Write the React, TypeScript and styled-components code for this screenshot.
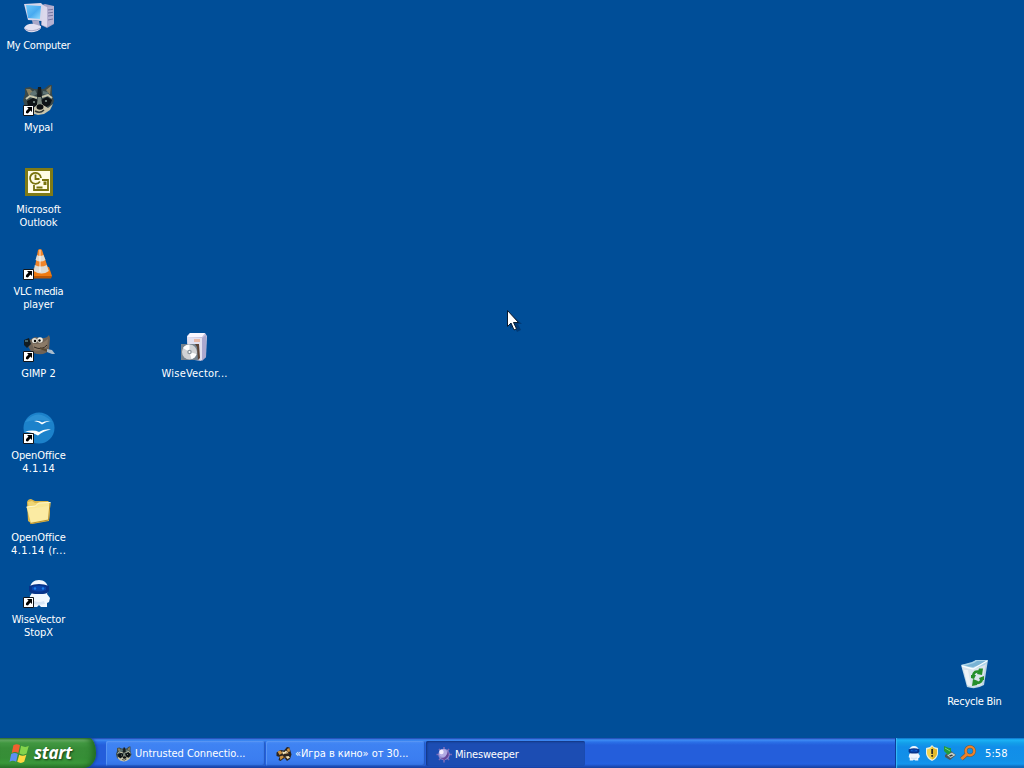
import React from 'react';
import styled, { createGlobalStyle } from 'styled-components';

const GlobalStyle = createGlobalStyle`
  * { box-sizing: border-box; }
  body { margin: 0; overflow: hidden; }
`;

const Screen = styled.div`
  position: relative;
  display: flex;
  flex-direction: column;
  width: 1024px;
  height: 768px;
  overflow: hidden;
  background: #004e98;
  color: #fff;
  font-family: 'DejaVu Sans Condensed', 'DejaVu Sans', sans-serif;
  font-stretch: condensed;
  font-size: 11px;
  cursor: default;
`;

const Desktop = styled.main`
  flex: 1;
  position: relative;
`;

const IconColumn = styled.div`
  display: flex;
  flex-direction: column;
  width: 77px;
`;

const Shortcut = styled.div`
  display: flex;
  flex-direction: column;
  align-items: center;
  width: 77px;
  height: 82px;
  padding-top: 2px;
`;

const Placed = styled.div<{ $x: number; $y: number }>`
  position: absolute;
  left: ${(p) => p.$x}px;
  top: ${(p) => p.$y}px;
`;

const Caption = styled.span<{ $track: number }>`
  height: 13px;
  line-height: 13px;
  white-space: nowrap;
  letter-spacing: ${(p) => p.$track}px;
  margin-right: ${(p) => -p.$track}px;
`;

const IconArt = styled.svg`
  display: block;
  flex: none;
  width: 32px;
  height: 32px;
  margin-bottom: 5px;
  overflow: visible;
`;

const Pointer = styled.svg`
  position: absolute;
  left: 507px;
  top: 310px;
  width: 14px;
  height: 22px;
  overflow: visible;
`;

const Taskbar = styled.footer`
  display: flex;
  height: 30px;
  background: linear-gradient(#1941a5 0, #3168d5 1px, #3f8cf3 2px, #2b71e8 4px, #245edb 7px, #245edb 22px, #2461e0 26px, #1d4ebf 28px, #17409c 30px);
`;

const StartButton = styled.button`
  display: flex;
  align-items: center;
  width: 96px;
  height: 30px;
  padding: 0 0 1px 9px;
  border: 0;
  border-radius: 0 7px 12px 0 / 0 15px 15px 0;
  background: linear-gradient(#2d702d 0, #67ac65 2px, #429842 5px, #388d38 10px, #368e36 20px, #3a983a 25px, #2a742a 30px);
  box-shadow: inset -5px 0 6px -2px #1f681f, 1px 0 3px #163f9b;
  color: #fff;
  font: italic bold 17px/26px 'Open Sans', 'Noto Sans', sans-serif;
  letter-spacing: -0.25px;
  text-shadow: 1px 1px 2px #143c14;
`;

const Flag = styled.svg`
  width: 22px;
  height: 22px;
  margin-right: 3px;
`;

const TaskList = styled.nav`
  display: flex;
  flex: 1;
  gap: 1px;
  padding: 3px 0 0 10px;
`;

const Task = styled.div<{ $active?: boolean }>`
  display: flex;
  align-items: center;
  width: 159px;
  height: 25px;
  padding-left: 10px;
  padding-top: ${(p) => (p.$active ? 2 : 0)}px;
  border-radius: 2px;
  background: ${(p) => (p.$active ? '#1c4db3' : 'linear-gradient(#4c8ef6 0, #3f83f3 3px, #3b7df0 19px, #3473e4 25px)')};
  box-shadow: ${(p) => (p.$active ? 'inset 1px 1px 2px #12357f' : 'inset -1px -1px 1px #2359c0, inset 1px 1px 0 #5795f4')};
`;

const SmallArt = styled.svg`
  flex: none;
  width: 16px;
  height: 16px;
  overflow: visible;
`;

const TaskTitle = styled.span<{ $track: number }>`
  margin-left: 3px;
  line-height: 14px;
  white-space: nowrap;
  letter-spacing: ${(p) => p.$track}px;
`;

const Tray = styled.aside`
  display: flex;
  align-items: center;
  gap: 2px;
  width: 129px;
  height: 30px;
  padding-left: 10px;
  border-left: 1px solid #0b3e9b;
  background: linear-gradient(#0c59b9 0, #129ae8 1px, #1cb2f6 2px, #139ee9 5px, #118ee9 9px, #1290e8 22px, #1396ee 26px, #1075c8 28px, #095bae 30px);
  box-shadow: inset 1px 0 1px #39bdf8;
`;

const Clock = styled.time`
  margin-left: 7px;
  letter-spacing: 0.1px;
`;

function ShortcutBadge() {
  return (
    <g>
      <path d="M0.5 21.5h10v10h-10z" fill="#fff" stroke="#10151b" />
      <path d="M4 23h5v5l-1.6-1.6-2.5 3.2-2-.6q0-2.500 2.600-4.400z" fill="#000" />
    </g>
  );
}

function RaccoonShapes() {
  return (
    <g>
      <path d="M2 4l5-1 4 2h10l5-4 3 0 0 9 2 7-3 7-6 4-6 2-7-2-7-4-2-8 2-6z" fill="#39494b" />
      <path d="M3 5l4 0 3 3-4 4zM28 2l-5 4 4 5z" fill="#8a8262" />
      <path d="M7 9l5-3 2 4-5 3zM20 7l5 1 1 4-6-2z" fill="#5f7474" />
      <path d="M15 3h3l1 9-2 6-3-6z" fill="#161c1e" />
      <path d="M3 15l4-3 7 2M29 14l-4-3-6 2" stroke="#c9c8ae" strokeWidth="2" fill="none" />
      <path d="M4 17l6-3 5 2-1 5-5 3-4-2zM18 16l6-3 5 3-2 5-4 2-4-2z" fill="#0e1316" />
      <path d="M3 21l6 4 4-3 4-5 3 4 5 3 5-4-3 6-6 4-6 1-7-2-4-4z" fill="#c9c5ab" />
      <path d="M15 13l3 0 1 7-3 2-2-2z" fill="#78847b" />
      <circle cx="11" cy="18" r="1.1" fill="#82958f" />
      <circle cx="23" cy="17" r="1.1" fill="#82958f" />
      <ellipse cx="17" cy="23" rx="3.5" ry="2.700" fill="#0b0e10" />
      <path d="M12 27q5 3 9-1" stroke="#303737" strokeWidth="1.500" fill="none" />
    </g>
  );
}

function RobotShapes() {
  return (
    <g>
      <path d="M7 13C7 7 11 4 16 4s9 3 9 9l-1 5 3 4-1 4-2 1v4h-6l-2-2-2 2H8v-5l-2-1 1-5 2-3z" fill="#f0f7ff" />
      <path d="M6 10q10-4 20 0v5q-2 3-6 3h-8q-4 0-6-3z" fill="#07338a" />
      <path d="M9 11q7-2.500 14 0v3q-7 3-14 0z" fill="#0845ad" />
      <circle cx="12" cy="12.500" r="1.200" fill="#1a7ee8" />
      <circle cx="20" cy="12.500" r="1.200" fill="#1a7ee8" />
      <path d="M11 25q5 2 10 0l1 3-6 1-6-1z" fill="#d5e4f5" />
    </g>
  );
}

function ComputerIcon() {
  return (
    <IconArt viewBox="0 0 32 32">
      <defs>
        <linearGradient id="glass" x2="1" y2="1"><stop stopColor="#6cc8fb" /><stop offset=".55" stopColor="#48aaf0" /><stop offset="1" stopColor="#93dcff" /></linearGradient>
      </defs>
      <path d="M19 3l3-1 9 2v18l-7 4-6-3z" fill="#a6a3c5" />
      <path d="M19 3l5 2v20l-5-2z" fill="#dcd9ec" />
      <path d="M24 5l7-1v17l-7 4z" fill="#b5b1d2" />
      <path d="M25 8l5-.7M25 11l5-.7M25 14l5-.7M25 18l5-1" stroke="#77769f" />
      <path d="M1 2l17-1 3 3-2 15-14-1z" fill="#d8d7ea" />
      <path d="M3 3l15 1-1 13L5 16z" fill="url(#glass)" />
      <path d="M9 18l7 1 1 5-7-1z" fill="#aaa8c8" />
      <path d="M1 26q3-5 10-4l7 2q1 4-7 6-8 1-10-4z" fill="#e3e1f1" />
      <path d="M2 27q6 4 16-1" fill="none" stroke="#a6a4c4" />
    </IconArt>
  );
}

function MypalIcon() {
  return <IconArt viewBox="0 0 32 32"><RaccoonShapes /><ShortcutBadge /></IconArt>;
}

function OutlookIcon() {
  return (
    <IconArt viewBox="0 0 32 32">
      <path d="M2 2h28v28H2z" fill="#807b16" />
      <path d="M5 5h22v22H5z" fill="#fffce5" />
      <g fill="none" stroke="#77720d" strokeWidth="1.800">
        <path d="M17 15.500A5.500 5.500 0 1 1 18 12M12.500 8.500v4.500h4" />
        <path d="M19 14h6v10H11v-5M13.500 21.500h6" />
      </g>
      <path d="M20.500 15.500h3v3.500h-3z" fill="#77720d" />
    </IconArt>
  );
}

function VlcIcon() {
  return (
    <IconArt viewBox="0 0 32 32">
      <path d="M11 20l15-1 3 9-2 2-17 0-3-3z" fill="#ef7a12" />
      <path d="M8 28h21l-1 2.500H10z" fill="#b95709" />
      <path d="M15 2q2-2 4 0l7 21q-6 5-15 1z" fill="#f1852a" />
      <path d="M14 7q3 2 6.500 0l2 5q-5 3-10 0zM11.800 17q6 3 12 0l2 6q-7 5-15 0z" fill="#dddbd5" />
      <path d="M17 2l0 22" stroke="#fff" strokeOpacity=".4" strokeWidth="2" />
      <ShortcutBadge />
    </IconArt>
  );
}

function GimpIcon() {
  return (
    <IconArt viewBox="0 0 32 32">
      <path d="M4 12l6-4 2-1 5 1q6 1 9-3l1 3-1 12q-3 5-12 4-8-1-10-12z" fill="#6f6357" />
      <path d="M9 13q8 3 16-4l-1 8q-6 5-13 3z" fill="#8b7a67" />
      <path d="M1 10l5-2 2 6-4 4-3-3z" fill="#111b20" />
      <path d="M2 11l3 0" stroke="#77a5a8" />
      <circle cx="11.500" cy="10.500" r="2.600" fill="#dedfd7" /><circle cx="17" cy="10" r="2.800" fill="#f3f0e6" />
      <circle cx="12" cy="11" r="1.200" /><circle cx="16.500" cy="10.500" r="1.200" />
      <path d="M11 17q8 4 13-2" stroke="#332b25" fill="none" />
      <path d="M17 18l8 3" stroke="#574833" strokeWidth="2" />
      <path d="M24 19l5 1 3 4-3 0-5-2z" fill="#a9bccd" />
      <ShortcutBadge />
    </IconArt>
  );
}

function OfficeIcon() {
  return (
    <IconArt viewBox="0 0 32 32">
      <circle cx="16" cy="16" r="15.500" fill="#1c82cb" />
      <path d="M2 10q13-15 27 0-13-4-27 0z" fill="#2c90d4" />
      <path d="M11 9q5-1 8 1.500 3-2 8-1.500-4 .5-8 3.500-3-3-8-3.500zM2 19.500q9-2 14 .5 5-3.500 12-2.500-8 1.500-13 6-5-3-13-4z" fill="#fff" />
      <ShortcutBadge />
    </IconArt>
  );
}

function FolderIcon() {
  return (
    <IconArt viewBox="0 0 32 32">
      <path d="M4 8q1-3 4-3l4 2 13 0 2 2-1 18-17 3-4-3z" fill="#dbb64a" />
      <path d="M5 8l4-1 3 2 13-1v8H6z" fill="#f0d674" />
      <path d="M3.500 13l9-1 3-3 12-.5-1.500 17.500-18 3.500z" fill="#f9e795" />
      <path d="M5 15l21-3-1 13-17 3z" fill="#fceeae" fillOpacity=".6" />
      <path d="M3.500 13l9-1 3-3 12-.5" fill="none" stroke="#fffad0" />
      <path d="M7 29.500l18.500-3.500 1.500-17" fill="none" stroke="#b98f2b" />
    </IconArt>
  );
}

function StopXIcon() {
  return <IconArt viewBox="0 0 32 32"><RobotShapes /><ShortcutBadge /></IconArt>;
}

function InstallerIcon() {
  return (
    <IconArt viewBox="0 0 32 32">
      <path d="M8 6l3-3 15 0 2 3-1 21-5 4-13-2z" fill="#c5c2df" />
      <path d="M8 7l15 1v22l-14-2z" fill="#e1e0f0" />
      <path d="M23 8l4-3 0 22-4 4z" fill="#aba8ce" />
      <path d="M8 7l3-4 15 0-3 4z" fill="#f8f6ff" />
      <path d="M15 9h6v3h-6z" fill="#e7b7a5" />
      <path d="M2 14h17v16H2z" fill="#75838f" />
      <circle cx="10.500" cy="22" r="7.500" fill="#d0d2d5" />
      <path d="M10.500 22L4 18a7.500 7.500 0 0 1 6.500-3.500zM10.500 22l7 2a7.500 7.500 0 0 1-5 5z" fill="#fff" />
      <circle cx="10.500" cy="22" r="2.300" fill="#8c969e" /><circle cx="10.500" cy="22" r="1" fill="#fff" />
      <path d="M16 14l4 0 1 14-2 2-1-13z" fill="#5c4335" />
    </IconArt>
  );
}

function RecycleIcon() {
  return (
    <IconArt viewBox="0 0 32 32">
      <path d="M2 7l11-2 4-3 12 0-4 25q-8 5-17 2z" fill="#b9d4e4" />
      <path d="M3 9l10 1 14-5-4 22q-7 3-14 1z" fill="#dae5ec" />
      <path d="M2 7l11-3 4-2 12 0-3 5-12 4z" fill="#a9d3e8" />
      <path d="M5 8l10-3 3-2 9 0-3 3-10 3z" fill="#78b3d4" />
      <path d="M3 8l11 3 14-8" fill="none" stroke="#f8fdff" strokeWidth="1.400" />
      <path d="M5 12l4 0 3 16-4-1z" fill="#fff" fillOpacity=".5" />
      <g fill="none" stroke="#258f2b" strokeWidth="2.600">
        <path d="M14 18q1-6 7-4M23 20q0 5-6 5" />
      </g>
      <path d="M20 10.500l4 0-1 6.500-5-1zM13 28l1-7 5 2-1 4zM12 17h5l-2 4-3-1zM20 20l5-2v4h-4z" fill="#258f2b" />
    </IconArt>
  );
}

type Line = [text: string, track: number];

const shortcuts: { icon: React.ReactNode; lines: Line[] }[] = [
  { icon: <ComputerIcon />, lines: [['My Computer', -0.25]] },
  { icon: <MypalIcon />, lines: [['Mypal', -0.1]] },
  { icon: <OutlookIcon />, lines: [['Microsoft', -0.05], ['Outlook', -0.1]] },
  { icon: <VlcIcon />, lines: [['VLC media', -0.4], ['player', -0.1]] },
  { icon: <GimpIcon />, lines: [['GIMP 2', 0]] },
  { icon: <OfficeIcon />, lines: [['OpenOffice', -0.1], ['4.1.14', 0.2]] },
  { icon: <FolderIcon />, lines: [['OpenOffice', -0.1], ['4.1.14 (r...', 0.35]] },
  { icon: <StopXIcon />, lines: [['WiseVector', -0.15], ['StopX', -0.1]] },
];

function DesktopItem({ icon, lines }: { icon: React.ReactNode; lines: Line[] }) {
  return (
    <Shortcut>
      {icon}
      {lines.map(([text, track]) => <Caption key={text} $track={track}>{text}</Caption>)}
    </Shortcut>
  );
}

export default function App() {
  return (
    <Screen>
      <GlobalStyle />
      <Desktop>
        <IconColumn>
          {shortcuts.map((s, i) => <DesktopItem key={i} {...s} />)}
        </IconColumn>
        <Placed $x={156} $y={328}><DesktopItem icon={<InstallerIcon />} lines={[['WiseVector...', 0.2]]} /></Placed>
        <Placed $x={936} $y={656}><DesktopItem icon={<RecycleIcon />} lines={[['Recycle Bin', -0.25]]} /></Placed>
        <Pointer viewBox="0 0 14 22">
          <path d="M3 3v16l4-3 3 6 4-2-3-6h4z" fill="#001f45" opacity=".4" />
          <path d="M.5.5v16l3.500-3.500 3 7 2.500-1.300-3-6.200h5z" fill="#fff" stroke="#071a31" />
        </Pointer>
      </Desktop>
      <Taskbar>
        <StartButton>
          <Flag viewBox="0 0 20 20">
            <path d="M4 3q3-2 6 0L8.500 10q-3-2-6 0z" fill="#f0602f" />
            <path d="M11 3.500q4 2 7 0l-2 7q-3 2-6.500 0z" fill="#84d44c" />
            <path d="M2 11q3-2 6 0l-1.500 7q-3-2-6 0z" fill="#5d8ff2" />
            <path d="M9.300 11.500q3 2 6.500 0l-2 6.500q-3 2-6.300 0z" fill="#ffd83f" />
          </Flag>
          start
        </StartButton>
        <TaskList>
          <Task>
            <SmallArt viewBox="0 0 32 32"><RaccoonShapes /></SmallArt>
            <TaskTitle $track={-0.04}>Untrusted Connectio...</TaskTitle>
          </Task>
          <Task>
            <SmallArt viewBox="0 0 32 32">
              <path d="M1 13l8-5 7 1 6-7 5 1 2 7 2 7-3 9-6 4-5-6-8 6-4-2 2-6-6-2z" fill="#2b2420" />
              <path d="M3 11l6-2 4 5-6 4zM22 6l5-2 1 7-5 1zM7 21l6-2 3 3-7 6z" fill="#ca9043" />
              <path d="M12 11l5 1 3-3 5 5-3 2-4-1-4 2zM19 21l6-1 3 3-5 3z" fill="#f1dfb3" />
              <path d="M20 14l5 1M15 22l5 2" stroke="#6f4720" strokeWidth="2" />
            </SmallArt>
            <TaskTitle $track={-0.04}>«Игра в кино» от 30...</TaskTitle>
          </Task>
          <Task $active>
            <SmallArt viewBox="0 0 16 16">
              <path d="M8 0v15.500M.5 7.500h15.500M3 2l10 11M13 2L3 13" stroke="#7a6cba" strokeWidth="1.600" />
              <circle cx="8" cy="7.500" r="5.700" fill="#9189cf" />
              <circle cx="7" cy="6" r="4" fill="#b2abe4" />
              <circle cx="5.500" cy="5" r="2.200" fill="#f2eeff" />
              <path d="M12 4q3 5-3.500 9l-4-1.500q6 0 7.500-7.500z" fill="#66479a" />
            </SmallArt>
            <TaskTitle $track={-0.18}>Minesweeper</TaskTitle>
          </Task>
        </TaskList>
        <Tray>
          <SmallArt viewBox="2 2 28 30"><RobotShapes /></SmallArt>
          <SmallArt viewBox="0 0 16 16">
            <path d="M8 0l2 2 4 1v6q-1 5-6 7-5-2-6-7V3l4-1z" fill="#e9f0df" />
            <path d="M8 1.500l2 2 3 1v4q-1 4-5 6-4-2-5-6v-4l3-1z" fill="#f3d44c" />
            <path d="M8 1.500l2 2 3 1v4q-1 4-5 6z" fill="#e2b92b" />
            <path d="M7.300 4h1.600v5H7.300zM7.300 10h1.600v1.800H7.300z" fill="#222" />
          </SmallArt>
          <SmallArt viewBox="0 0 16 16">
            <path d="M3 10l6-4 5 4-6 5-5-3z" fill="#4e565a" />
            <path d="M5 10l5-2.500 3.500 2.500-5 3z" fill="#c4d0cd" />
            <path d="M7 10.500l3-1 1 1-3 1.300z" fill="#343b3d" />
            <path d="M2 1l5 2 2 0v4l-3 3-4-4z" fill="#239b3c" />
            <path d="M3 3l5 3" stroke="#75da75" />
          </SmallArt>
          <SmallArt viewBox="0 0 16 16">
            <circle cx="10" cy="6" r="4.300" fill="none" stroke="#6a593c" strokeWidth="3.200" />
            <path d="M7 9l-5.500 5" stroke="#6a593c" strokeWidth="4" />
            <circle cx="10" cy="6" r="4.300" fill="none" stroke="#ee812b" strokeWidth="2.300" />
            <path d="M7 9l-5.500 5" stroke="#ee812b" strokeWidth="3" />
          </SmallArt>
          <Clock>5:58</Clock>
        </Tray>
      </Taskbar>
    </Screen>
  );
}
